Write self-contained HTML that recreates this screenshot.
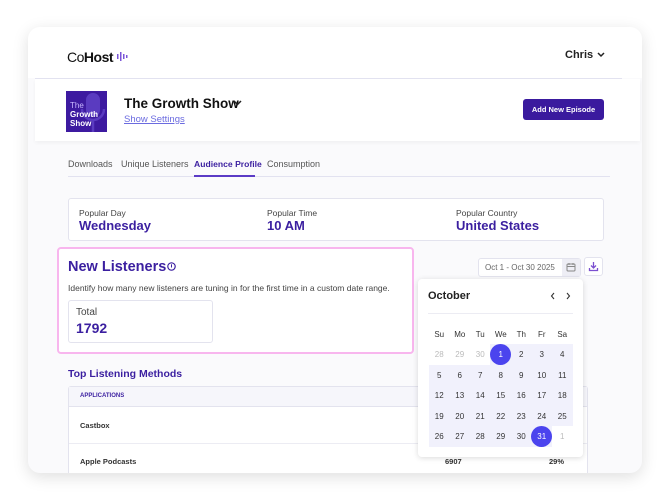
<!DOCTYPE html>
<html><head><style>
*{margin:0;padding:0;box-sizing:border-box}
body{width:670px;height:501px;background:#fff;font-family:"Liberation Sans",sans-serif;position:relative;overflow:hidden;color:#222}
.a{position:absolute}
.card{left:28px;top:27px;width:614px;height:446px;border-radius:12px;background:#fafafc;box-shadow:0 4px 16px rgba(0,0,0,.13);overflow:hidden}
.p{color:#3b1fa0;font-weight:bold}
.cal td{width:20.5px;height:20.5px;text-align:center;font-size:8px;color:#333}
</style></head><body>
<div class="a card">
  <div class="a" style="left:0;top:0;width:614px;height:51px;background:#fff"></div>
  <div class="a" style="left:7px;top:51px;width:587px;height:1px;background:#e2e2f0"></div>
  <div class="a" style="left:7px;top:52px;width:605px;height:62px;background:#fff;box-shadow:0 2px 4px rgba(0,0,0,.04)"></div>
  <div class="a" style="left:40px;top:359px;width:520px;height:100px;background:#fff;border:1px solid #e3e3ee;border-radius:3px"></div>
  <div class="a" style="left:41px;top:360px;width:518px;height:20px;background:#f6f6fb;border-bottom:1px solid #e3e3ee"></div>
  <div class="a" style="left:41px;top:416px;width:518px;height:1px;background:#ececf3"></div>
</div>
<div class="a" style="left:67px;top:49px;font-size:14px;letter-spacing:-0.5px;color:#111">Co<b>Host</b></div>
<svg class="a" style="left:117px;top:52px" width="12" height="9"><g fill="#7b55d8"><rect x="0" y="2" width="1.5" height="5"/><rect x="3" y="0" width="1.5" height="9"/><rect x="6" y="2" width="1.5" height="5"/><rect x="9" y="3" width="1.5" height="3"/></g></svg>
<div class="a" style="left:565px;top:49px;font-size:11px;font-weight:bold;color:#222">Chris</div>
<svg class="a" style="left:597px;top:52px" width="8" height="6"><path d="M1 1l3 3 3-3" stroke="#222" stroke-width="1.5" fill="none"/></svg>

<div class="a" style="left:66px;top:91px;width:41px;height:41px;background:#3d1aa0;overflow:hidden">
  <svg class="a" style="left:14px;top:0" width="27" height="41"><rect x="6" y="2" width="14" height="24" rx="7" fill="#5a3bc0"/><path d="M2 18a11 11 0 0 0 22 0M13 29v12" stroke="#5a3bc0" stroke-width="2.5" fill="none"/></svg>
  <div class="a" style="left:4px;top:10px;font-size:8px;line-height:9px;color:#c9b8ff">The</div>
  <div class="a" style="left:4px;top:19px;font-size:8px;line-height:9px;color:#fff;font-weight:bold">Growth<br>Show</div>
</div>
<div class="a" style="left:124px;top:96px;font-size:13.5px;font-weight:bold;color:#111">The Growth Show</div>
<svg class="a" style="left:233px;top:100px" width="9" height="7"><path d="M1 1l3.5 3.5L8 1" stroke="#222" stroke-width="1.5" fill="none"/></svg>
<div class="a" style="left:124px;top:114px;font-size:9.5px;color:#6b6be0;text-decoration:underline">Show Settings</div>
<div class="a" style="left:523px;top:99px;width:81px;height:21px;background:#3a1a9e;border-radius:3px;color:#fff;font-size:7.5px;font-weight:bold;text-align:center;line-height:21px">Add New Episode</div>

<div class="a" style="left:68px;top:159px;font-size:9px;color:#555">Downloads</div>
<div class="a" style="left:121px;top:159px;font-size:9px;color:#555">Unique Listeners</div>
<div class="a p" style="left:194px;top:159px;font-size:8.6px">Audience Profile</div>
<div class="a" style="left:267px;top:159px;font-size:9px;color:#555">Consumption</div>
<div class="a" style="left:68px;top:176px;width:542px;height:1px;background:#e2e2f0"></div>
<div class="a" style="left:194px;top:175px;width:61px;height:2px;background:#5b3bc6"></div>

<div class="a" style="left:68px;top:198px;width:536px;height:43px;background:#fff;border:1px solid #e3e3ee;border-radius:3px"></div>
<div class="a" style="left:79px;top:208px;font-size:8.5px;color:#444">Popular Day</div>
<div class="a p" style="left:79px;top:218px;font-size:13px">Wednesday</div>
<div class="a" style="left:267px;top:208px;font-size:8.5px;color:#444">Popular Time</div>
<div class="a p" style="left:267px;top:218px;font-size:13px">10 AM</div>
<div class="a" style="left:456px;top:208px;font-size:8.5px;color:#444">Popular Country</div>
<div class="a p" style="left:456px;top:218px;font-size:13px">United States</div>

<div class="a" style="left:57px;top:247px;width:357px;height:107px;background:#fff;border:2px solid #f8b6ee;border-radius:4px"></div>
<div class="a p" style="left:68px;top:259px;font-size:14.5px">New Listeners</div>
<svg class="a" style="left:167px;top:262px" width="9" height="9"><circle cx="4.5" cy="4.5" r="3.7" stroke="#3b1fa0" stroke-width="1.2" fill="none"/><rect x="4" y="2.3" width="1" height="3.2" fill="#3b1fa0"/></svg>
<div class="a" style="left:68px;top:283px;font-size:8.5px;color:#444">Identify how many new listeners are tuning in for the first time in a custom date range.</div>
<div class="a" style="left:68px;top:300px;width:145px;height:43px;background:#fff;border:1px solid #e3e3ee;border-radius:3px"></div>
<div class="a" style="left:76px;top:307px;font-size:10px;color:#444">Total</div>
<div class="a p" style="left:76px;top:320px;font-size:14px">1792</div>

<div class="a p" style="left:68px;top:368px;font-size:10.5px">Top Listening Methods</div>
<div class="a p" style="left:80px;top:393px;font-size:6px">APPLICATIONS</div>
<div class="a" style="left:80px;top:421px;font-size:7.5px;font-weight:bold;color:#333">Castbox</div>
<div class="a" style="left:80px;top:457px;font-size:7.5px;font-weight:bold;color:#333">Apple Podcasts</div>
<div class="a" style="left:445px;top:457px;font-size:7.5px;font-weight:bold;color:#333">6907</div>
<div class="a" style="left:549px;top:457px;font-size:7.5px;font-weight:bold;color:#333">29%</div>

<div class="a" style="left:478px;top:258px;width:103px;height:19px;background:#fff;border:1px solid #e3e3ee;border-radius:3px"></div>
<div class="a" style="left:485px;top:263px;font-size:8px;color:#666">Oct 1 - Oct 30 2025</div>
<div class="a" style="left:562px;top:259px;width:18px;height:17px;background:#eeeef5"></div>
<svg class="a" style="left:566px;top:262px" width="10" height="10"><rect x="1" y="2" width="8" height="7" rx="1" stroke="#888" fill="none"/><path d="M1 4.5h8M3 1v2M7 1v2" stroke="#888"/></svg>
<div class="a" style="left:584px;top:257px;width:19px;height:19px;background:#fff;border:1px solid #e3e3ee;border-radius:3px"></div>
<svg class="a" style="left:588px;top:261px" width="11" height="11"><path d="M5.5 1v6M3 4.5l2.5 2.5 2.5-2.5M1.5 7v2.5h8V7" stroke="#7b4fd0" stroke-width="1.3" fill="none"/></svg>

<div class="a" style="left:418px;top:279px;width:165px;height:178px;background:#fff;border-radius:4px;box-shadow:0 1px 6px rgba(0,0,0,.15)"></div>
<div class="a" style="left:428px;top:290px;font-size:11px;font-weight:bold;color:#222">October</div>
<svg class="a" style="left:550px;top:292px" width="22" height="8"><path d="M4 1L1.5 4 4 7M17 1l2.5 3L17 7" stroke="#333" stroke-width="1.1" fill="none"/></svg>
<div class="a" style="left:428px;top:313px;width:145px;height:1px;background:#ececf3"></div>
<div class="a" style="left:490px;top:344px;width:83px;height:20.5px;background:#f1f1fc"></div>
<div class="a" style="left:429px;top:364.5px;width:144px;height:61.5px;background:#f1f1fc"></div>
<div class="a" style="left:429px;top:426px;width:123px;height:20.5px;background:#f1f1fc"></div>
<div class="a" style="left:490px;top:343.5px;width:21px;height:21px;border-radius:50%;background:#4b44ee"></div>
<div class="a" style="left:531px;top:426px;width:21px;height:21px;border-radius:50%;background:#4b44ee"></div>
<table class="a cal" style="left:429px;top:324px;border-collapse:collapse">
<tr><td>Su</td><td>Mo</td><td>Tu</td><td>We</td><td>Th</td><td>Fr</td><td>Sa</td></tr>
<tr><td style="color:#bbb">28</td><td style="color:#bbb">29</td><td style="color:#bbb">30</td><td style="color:#fff">1</td><td>2</td><td>3</td><td>4</td></tr>
<tr><td>5</td><td>6</td><td>7</td><td>8</td><td>9</td><td>10</td><td>11</td></tr>
<tr><td>12</td><td>13</td><td>14</td><td>15</td><td>16</td><td>17</td><td>18</td></tr>
<tr><td>19</td><td>20</td><td>21</td><td>22</td><td>23</td><td>24</td><td>25</td></tr>
<tr><td>26</td><td>27</td><td>28</td><td>29</td><td>30</td><td style="color:#fff">31</td><td style="color:#bbb">1</td></tr>
</table>
</body></html>
